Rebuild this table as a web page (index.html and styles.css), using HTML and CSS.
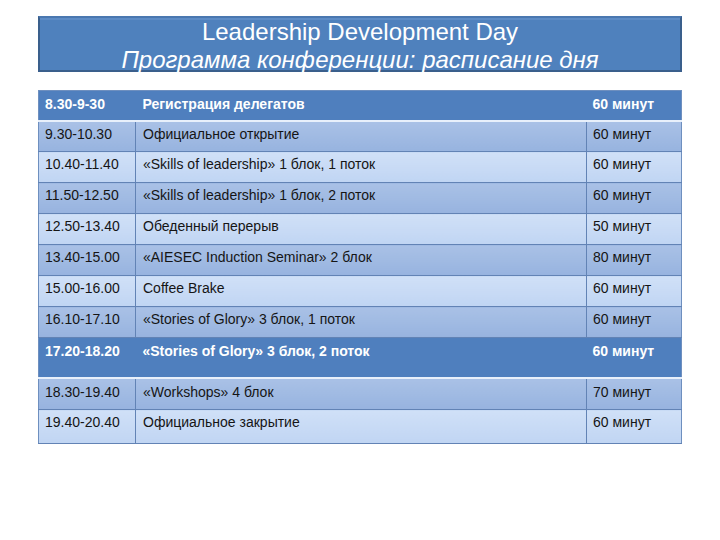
FILE: index.html
```html
<!DOCTYPE html>
<html lang="ru">
<head>
<meta charset="utf-8">
<title>Leadership Development Day</title>
<link rel="stylesheet" href="styles.css">
</head>
<body>
<div class="page">
  <header class="title-box">
    <div class="title-main">Leadership Development Day</div>
    <div class="title-sub">Программа конференции: расписание дня</div>
  </header>
  <table class="schedule">
    <colgroup>
      <col class="c-time">
      <col class="c-event">
      <col class="c-dur">
    </colgroup>
    <tbody>
      <tr class="head"><td>8.30-9-30</td><td>Регистрация делегатов</td><td>60 минут</td></tr>
      <tr class="dark"><td>9.30-10.30</td><td>Официальное открытие</td><td>60 минут</td></tr>
      <tr class="light"><td>10.40-11.40</td><td>«Skills of leadership» 1 блок, 1 поток</td><td>60 минут</td></tr>
      <tr class="dark"><td>11.50-12.50</td><td>«Skills of leadership» 1 блок, 2 поток</td><td>60 минут</td></tr>
      <tr class="light"><td>12.50-13.40</td><td>Обеденный перерыв</td><td>50 минут</td></tr>
      <tr class="dark"><td>13.40-15.00</td><td>«AIESEC Induction Seminar» 2 блок</td><td>80 минут</td></tr>
      <tr class="light"><td>15.00-16.00</td><td>Coffee Brake</td><td>60 минут</td></tr>
      <tr class="dark"><td>16.10-17.10</td><td>«Stories of Glory» 3 блок, 1 поток</td><td>60 минут</td></tr>
      <tr class="head tall"><td>17.20-18.20</td><td>«Stories of Glory» 3 блок, 2 поток</td><td>60 минут</td></tr>
      <tr class="dark after-tall"><td>18.30-19.40</td><td>«Workshops» 4 блок</td><td>70 минут</td></tr>
      <tr class="light last"><td>19.40-20.40</td><td>Официальное закрытие</td><td>60 минут</td></tr>
    </tbody>
  </table>
</div>
</body>
</html>
```

FILE: styles.css
```css
html, body {
  margin: 0;
  padding: 0;
  background: #ffffff;
}

.page {
  padding: 16px 0 0 38px;
  font-family: "Liberation Sans", Arial, sans-serif;
}

.title-box {
  width: 640px;
  height: 52px;
  padding-top: 3px;
  box-sizing: content-box;
  background: #4f81bd;
  border: 2px solid #3a5f8c;
  border-top-color: #4a78b0;
  box-shadow: inset 0 2px 0 #5d8cc6;
  color: #ffffff;
  text-align: center;
  display: flex;
  flex-direction: column;
  justify-content: center;
}

.title-box {
  height: 49px;
}

.title-main {
  font-size: 24px;
  line-height: 28px;
}

.title-sub {
  font-size: 24px;
  line-height: 28px;
  font-style: italic;
}

.schedule {
  margin-top: 18px;
  width: 643px;
  border-collapse: collapse;
  table-layout: fixed;
  font-size: 14px;
  color: #151515;
  border: 1px solid #6e8fbf;
}

.c-time { width: 97px; }
.c-event { width: 451px; }
.c-dur { width: 95px; }

.schedule td {
  height: 31px;
  padding: 4px 6px 0 6px;
  vertical-align: top;
  box-sizing: border-box;
  border-bottom: 1px solid #6283b5;
  line-height: 16px;
  white-space: nowrap;
}

.schedule td + td {
  border-left: 1px solid #6283b5;
}

.schedule td:nth-child(2) {
  padding-left: 7px;
}

.dark td {
  background: linear-gradient(#a9c1e6, #97b3df);
}

.light td {
  background: linear-gradient(#d0e0f7, #c0d5f3);
}

.head td {
  background: #4f7fbe;
  color: #ffffff;
  font-weight: bold;
  border-left: none !important;
  border-bottom: 2px solid #e8f0fb;
  height: 30px;
  padding-top: 5px;
}

.head.tall td {
  height: 40px;
  padding-top: 5px;
}

.after-tall td {
  height: 32px;
  padding-top: 5px;
}

.last td {
  height: 34px;
}
```
